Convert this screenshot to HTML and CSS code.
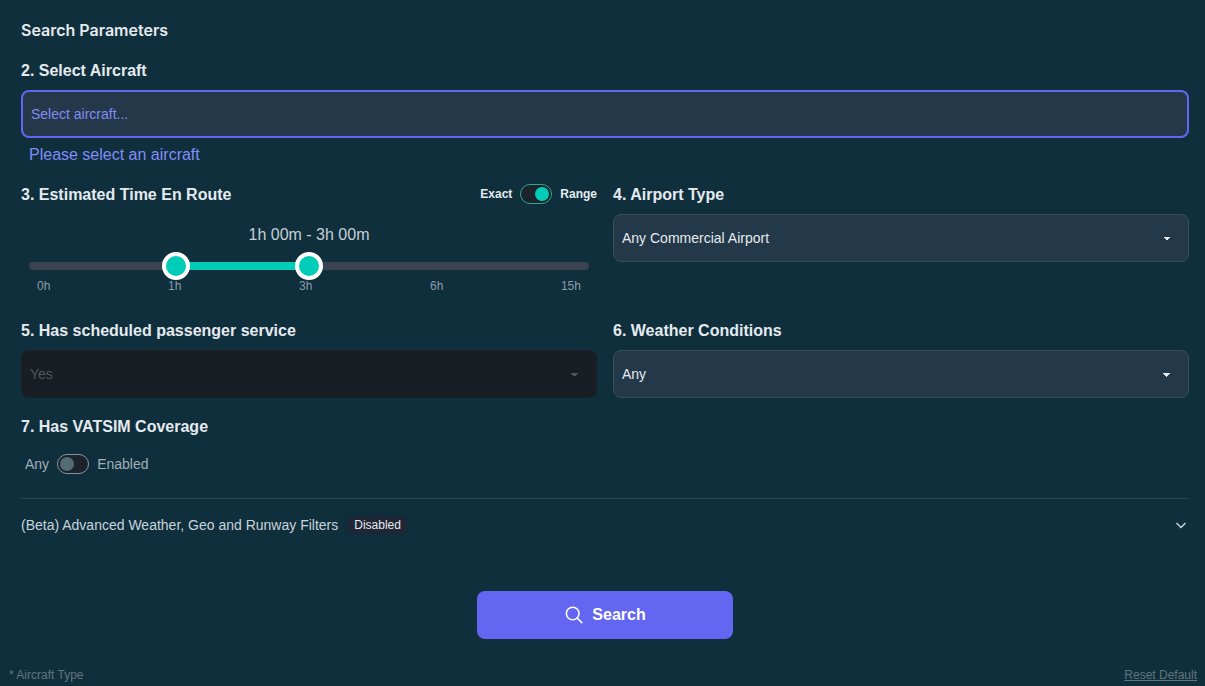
FILE: index.html
```html
<!DOCTYPE html>
<html lang="en">
<head>
<meta charset="utf-8">
<meta name="viewport" content="width=device-width, initial-scale=1">
<title>Search Parameters</title>
<link rel="stylesheet" href="styles.css">
</head>
<body>
<main class="page">
  <form class="search-form">
    <h1 class="title">Search Parameters</h1>

    <div class="field">
      <label class="field-label" for="aircraft">2. Select Aircraft</label>
      <input class="control control-required" id="aircraft" type="text" placeholder="Select aircraft...">
      <p class="hint">Please select an aircraft</p>
    </div>

    <div class="grid">
      <div class="field">
        <div class="field-head">
          <h2 class="field-label">3. Estimated Time En Route</h2>
          <label class="switch switch-strong" for="time-mode">
            <span>Exact</span>
            <input class="toggle" id="time-mode" type="checkbox" checked>
            <span>Range</span>
          </label>
        </div>
        <output class="range-value" for="time-min time-max">1h 00m - 3h 00m</output>
        <div class="range">
          <div class="range-track"><div class="range-fill"></div></div>
          <input class="range-input" id="time-min" type="range" min="0" max="100" value="25" aria-label="Minimum time">
          <input class="range-input" id="time-max" type="range" min="0" max="100" value="50" aria-label="Maximum time">
        </div>
        <div class="ticks">
          <span>0h</span><span>1h</span><span>3h</span><span>6h</span><span>15h</span>
        </div>
      </div>

      <div class="field">
        <label class="field-label" for="airport-type">4. Airport Type</label>
        <select class="control select" id="airport-type"><option>Any Commercial Airport</option></select>
      </div>

      <div class="field">
        <label class="field-label" for="service">5. Has scheduled passenger service</label>
        <select class="control select" id="service" disabled><option>Yes</option></select>
      </div>

      <div class="field">
        <label class="field-label" for="weather">6. Weather Conditions</label>
        <select class="control select" id="weather"><option>Any</option></select>
      </div>

      <div class="field">
        <h2 class="field-label">7. Has VATSIM Coverage</h2>
        <label class="switch switch-muted" for="vatsim">
          <span>Any</span>
          <input class="toggle" id="vatsim" type="checkbox">
          <span>Enabled</span>
        </label>
      </div>
    </div>

    <details class="advanced">
      <summary class="advanced-head">
        <span>(Beta) Advanced Weather, Geo and Runway Filters</span>
        <span class="badge">Disabled</span>
        <svg class="chevron" viewBox="0 0 16 16" aria-hidden="true"><path d="M3.5 6L8 10.5 12.5 6"/></svg>
      </summary>
    </details>

    <button class="search-button" type="submit">
      <svg class="search-icon" viewBox="0 0 20 20" aria-hidden="true"><circle cx="8.7" cy="8.5" r="6.3"/><path d="M13.2 13L17.8 17.6"/></svg>
      Search
    </button>
  </form>

  <footer class="footer">
    <span>* Aircraft Type</span>
    <a class="reset" href="#">Reset Default</a>
  </footer>
</main>
</body>
</html>
```

FILE: styles.css
```css
* {
  box-sizing: border-box;
}

body {
  margin: 0;
  background: #0f2f3d;
  color: #e5eaee;
  font-family: "Liberation Sans", Arial, sans-serif;
  font-size: 16px;
  line-height: 24px;
}

.page {
  padding: 18px 8px 0 9px;
}

.search-form {
  display: flex;
  flex-direction: column;
  padding: 0 8px 0 12px;
}

.title {
  margin: 0 0 12px;
  font-family: Inter, sans-serif;
  font-size: 16px;
  font-weight: 600;
  line-height: 24px;
}

.field {
  display: flex;
  flex-direction: column;
  min-width: 0;
}

.field-label {
  margin: 0;
  padding: 5px 0 7px;
  font-size: 16px;
  font-weight: 700;
  line-height: 24px;
}

.field-head {
  display: flex;
  align-items: center;
  justify-content: space-between;
}

.control {
  width: 100%;
  height: 48px;
  padding: 0 8px;
  border: 1px solid #374f5c;
  border-radius: 8px;
  background-color: #233848;
  color: #e5eaee;
  font: inherit;
  font-size: 14px;
}

.control-required {
  border: 2px solid #6366f1;
}

.control-required::placeholder {
  color: #818cf8;
  opacity: 1;
}

.hint {
  margin: 5px 8px 11px;
  color: #818cf8;
}

.select {
  appearance: none;
  background-image:
    linear-gradient(45deg, transparent 50%, currentColor 50%),
    linear-gradient(135deg, currentColor 50%, transparent 50%);
  background-position: right 21px top 22px, right 17px top 22px;
  background-repeat: no-repeat;
  background-size: 4px 4px;
}

.select:disabled {
  border-color: #191e24;
  background-color: #191e24;
  color: #51565e;
  opacity: 1;
}

.grid {
  display: grid;
  grid-template-columns: repeat(2, minmax(0, 1fr));
  gap: 12px 16px;
}

.switch {
  display: flex;
  align-items: center;
  gap: 8px;
}

.switch-strong {
  padding-bottom: 4px;
  font-size: 12px;
  font-weight: 700;
}

.switch-muted {
  padding: 6px 4px 8px;
  color: #9fb0bb;
  font-size: 14px;
}

.toggle {
  display: flex;
  align-items: center;
  appearance: none;
  width: 32px;
  height: 20px;
  margin: 0;
  padding: 0 2px;
  border: 1px solid #8796a2;
  border-radius: 10px;
  background: #1d232a;
}

.toggle::before {
  content: "";
  width: 14px;
  height: 14px;
  border-radius: 50%;
  background: #546b78;
}

.toggle:checked {
  justify-content: flex-end;
  border-color: #2aa996;
}

.toggle:checked::before {
  background: #00cdb7;
}

.range-value {
  padding: 9px 0 5px;
  text-align: center;
  color: #c5d0d8;
}

.range {
  position: relative;
  display: flex;
  align-items: center;
  height: 28px;
  margin: 0 8px;
}

.range-track {
  width: 100%;
  height: 8px;
  padding: 0 14px;
  border-radius: 4px;
  background: #3b4252;
}

.range-fill {
  width: 25%;
  height: 8px;
  margin-left: 25%;
  background: #00cdb7;
}

.range-input {
  position: absolute;
  inset: 0;
  appearance: none;
  width: 100%;
  height: 28px;
  margin: 0;
  background: transparent;
  pointer-events: none;
}

.range-input::-webkit-slider-thumb {
  appearance: none;
  width: 28px;
  height: 28px;
  border: 4px solid #fff;
  border-radius: 50%;
  background: #00cdb7;
  pointer-events: auto;
}

.ticks {
  display: flex;
  justify-content: space-between;
  padding: 0 16px 10px;
  color: #8b9ca8;
  font-size: 12px;
  line-height: 12px;
}

.advanced {
  margin: 14px 0 48px;
  border-top: 1px solid #2b4653;
  color: #c8d4dc;
  font-size: 14px;
}

.advanced-head {
  display: flex;
  align-items: center;
  padding: 14px 0 6px;
  cursor: pointer;
  list-style: none;
}

.badge {
  margin-left: 10px;
  padding: 0 6px;
  border-radius: 8px;
  background: #202636;
  box-shadow: 0 0 4px #202636;
  color: #e5eaee;
  font-size: 12px;
  line-height: 16px;
}

.chevron {
  width: 16px;
  height: 16px;
  margin-left: auto;
  fill: none;
  stroke: currentColor;
  stroke-width: 1.5;
}

.search-button {
  display: flex;
  align-items: center;
  justify-content: center;
  align-self: center;
  gap: 8px;
  width: 256px;
  height: 48px;
  border: 0;
  border-radius: 8px;
  background: #6366f1;
  color: #fff;
  font: inherit;
  font-weight: 700;
}

.search-icon {
  width: 20px;
  height: 20px;
  fill: none;
  stroke: currentColor;
  stroke-width: 1.6;
  stroke-linecap: round;
}

.footer {
  display: flex;
  justify-content: space-between;
  padding-top: 28px;
  color: #63747f;
  font-size: 12px;
  line-height: 16px;
}

.reset {
  color: inherit;
}
```
